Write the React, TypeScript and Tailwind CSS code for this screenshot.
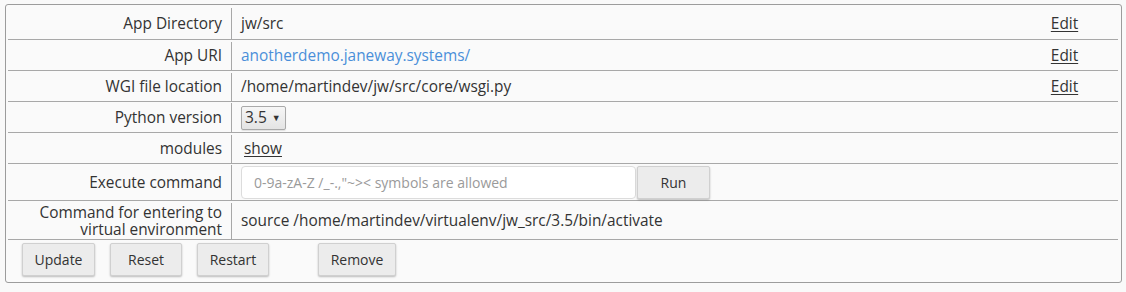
import { ReactNode } from "react";

type Row = {
  label: ReactNode;
  value: ReactNode;
  edit?: boolean;
  h: string;
};

function Btn({ children, className = "" }: { children: ReactNode; className?: string }) {
  return (
    <button
      className={`h-[33px] rounded-[2px] border border-[#d0d0d0] bg-[#ececec] text-[14px] text-[#333] shadow-[0_1px_2px_rgba(0,0,0,0.25)] ${className}`}
    >
      {children}
    </button>
  );
}

export default function App() {
  const rows: Row[] = [
    { label: "App Directory", value: "jw/src", edit: true, h: "h-[32px]" },
    {
      label: "App URI",
      value: <span className="text-[#4a8fd9]">anotherdemo.janeway.systems/</span>,
      edit: true,
      h: "h-[31px] pt-[2px]",
    },
    {
      label: "WGI file location",
      value: "/home/martindev/jw/src/core/wsgi.py",
      edit: true,
      h: "h-[31px] pt-[2px]",
    },
    {
      label: "Python version",
      value: (
        <span className="inline-flex h-[24px] w-[45px] items-center gap-[5px] rounded-[2px] border border-[#a9a9a9] bg-gradient-to-b from-[#f6f6f6] to-[#e4e4e4] pl-[3px] text-[15.5px] shadow-[0_1px_1px_rgba(0,0,0,0.1)]">
          3.5
          <span className="text-[9px]">▼</span>
        </span>
      ),
      h: "h-[31px] pt-[1px]",
    },
    {
      label: "modules",
      value: <span className="ml-[3px] underline underline-offset-2">show</span>,
      h: "h-[31px] pt-[2px]",
    },
    {
      label: "Execute command",
      value: (
        <div className="flex items-center">
          <input
            className="h-[33px] w-[395px] rounded-[4px] border border-[#dcdcdc] bg-white px-[12px] text-[14px] outline-none placeholder:text-[#9a9a9a]"
            placeholder={'0-9a-zA-Z /_-.,"~>< symbols are allowed'}
          />
          <Btn className="ml-[1px] w-[73px]">Run</Btn>
        </div>
      ),
      h: "h-[37px] pt-[1px]",
    },
    {
      label: (
        <span className="block leading-[17px]">
          Command for entering to
          <br />
          virtual environment
        </span>
      ),
      value: "source /home/martindev/virtualenv/jw_src/3.5/bin/activate",
      h: "h-[39px] pt-[2px]",
    },
  ];

  return (
    <div
      className="h-[292px] w-[1126px] bg-[#f9f9f9] pl-[5px] pt-[4px] text-[#333]"
      style={{ fontFamily: '"Open Sans", "Noto Sans", sans-serif' }}
    >
      <div className="h-[279px] w-[1117px] rounded-[3px] border border-[#9c9c9c] bg-[#fafafa] pl-[2px] pt-[3px]">
        <div className="w-[1110px] text-[15.4px]">
          {rows.map((r, i) => (
            <div key={i} className={`flex border-b border-[#a8a8a8] ${r.h}`}>
              <div className="flex w-[224px] shrink-0 items-center justify-end border-r border-[#a8a8a8] pr-[9px] text-right">
                {r.label}
              </div>
              <div className="flex flex-1 items-center pl-[9px]">{r.value}</div>
              {r.edit ? (
                <div className="flex w-[107px] items-center justify-center">
                  <span className="underline underline-offset-2">Edit</span>
                </div>
              ) : null}
            </div>
          ))}
          <div className="flex items-center pl-[14px] pt-[3px]">
            <Btn className="w-[73px]">Update</Btn>
            <Btn className="ml-[15px] w-[72px]">Reset</Btn>
            <Btn className="ml-[15px] w-[72px]">Restart</Btn>
            <Btn className="ml-[49px] w-[78px]">Remove</Btn>
          </div>
        </div>
      </div>
    </div>
  );
}
